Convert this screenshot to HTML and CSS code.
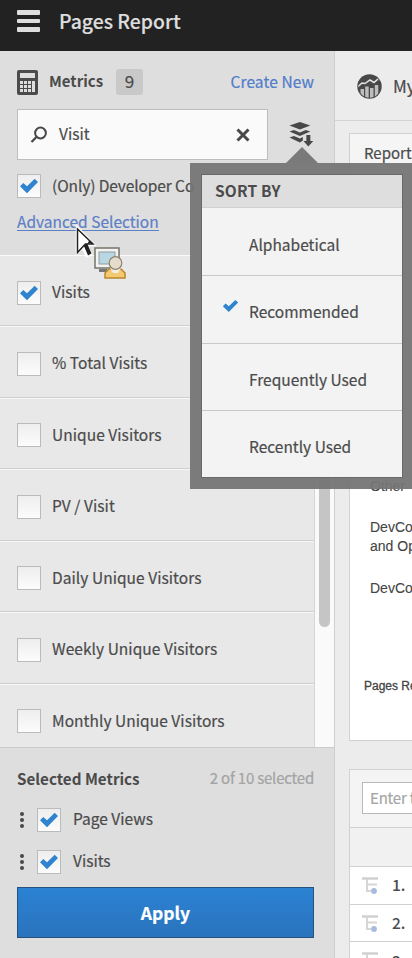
FILE: index.html
```html
<!DOCTYPE html>
<html lang="en">
<head>
<meta charset="utf-8">
<title>Pages Report</title>
<link rel="stylesheet" href="styles.css">
</head>
<body>
<svg class="defs" width="0" height="0">
  <symbol id="check" viewBox="0 0 20 16"><path d="M1 8.300 4.300 5 8 8.300 15.700 .8 19 4 8 15.200Z" fill="#2f83cf"/></symbol>
  <symbol id="tree" viewBox="0 0 17 17"><path d="M0 1.500h16" stroke="#cfcfcd" stroke-width="2.400"/><path d="M5 2v12h4M5 7.500h10" fill="none" stroke="#d8d6d2" stroke-width="2"/><circle cx="12" cy="14" r="2.900" fill="#a9b9e0"/></symbol>
</svg>
<header class="topbar">
  <div class="burger"><i></i><i></i><i></i></div>
  <h1>Pages Report</h1>
</header>
<main class="layout">
  <aside class="sidebar">
    <section class="tools">
      <div class="heading">
        <svg width="21" height="25" viewBox="0 0 21 25"><rect x="0" y="0" width="21" height="25" rx="2" fill="#4b4b4b"/><path d="M3 3h15v5H3zM3 11h3v3H3zM7 11h3v3H7zM11 11h3v3h-3zM15 11h3v11h-3zM3 15h3v3H3zM7 15h3v3H7zM11 15h3v3h-3zM3 19h3v3H3zM7 19h3v3H7zM11 19h3v3h-3z" fill="#dedede"/></svg>
        <b class="title">Metrics</b><span class="count">9</span><a class="create">Create New</a>
      </div>
      <div class="searchrow">
        <div class="search">
          <svg width="18" height="18" viewBox="0 0 18 18" fill="none" stroke="#484848" stroke-width="2"><circle cx="10.500" cy="7" r="5.400"/><path d="M6.700 10.800 1.500 16" stroke-width="2.300"/></svg>
          <span class="query">Visit</span>
          <svg class="clear" width="14" height="14" viewBox="0 0 14 14" stroke="#484848" stroke-width="3"><path d="M1.500 1.500 12.500 12.500M12.500 1.500 1.500 12.500"/></svg>
        </div>
        <svg class="layers" width="26" height="26" viewBox="0 0 26 26" fill="#484848"><path d="M1.500 4.500 12 1l10.500 3.500L12 8.500zM1.500 10.500l4.500-1.500 6 2.500L18 9l4.500 1.500L12 15zM1.500 16.500 6 15l6 2.500 3-1.500v3.500L12 21.500zM18.500 14h4v6h3L20.500 25.500 15.500 20h3z"/></svg>
      </div>
      <div class="only"><span class="box"><svg><use href="#check"/></svg></span><span class="t-only">(Only) Developer Co</span></div>
      <a class="advanced">Advanced Selection</a>
    </section>
    <section class="list">
      <div class="rows">
        <div class="row"><span class="box"><svg><use href="#check"/></svg></span><span>Visits</span></div>
        <div class="row"><span class="box"></span><span>% Total Visits</span></div>
        <div class="row"><span class="box"></span><span>Unique Visitors</span></div>
        <div class="row"><span class="box"></span><span>PV / Visit</span></div>
        <div class="row"><span class="box"></span><span>Daily Unique Visitors</span></div>
        <div class="row"><span class="box"></span><span>Weekly Unique Visitors</span></div>
        <div class="row"><span class="box"></span><span>Monthly Unique Visitors</span></div>
      </div>
      <div class="track"><div class="thumb"></div></div>
    </section>
    <section class="selected">
      <div class="selhead"><b>Selected Metrics</b><span>2 of 10 selected</span></div>
      <div class="selrow"><span class="grip"><i></i><i></i><i></i></span><span class="box"><svg><use href="#check"/></svg></span><span>Page Views</span></div>
      <div class="selrow"><span class="grip"><i></i><i></i><i></i></span><span class="box"><svg><use href="#check"/></svg></span><span>Visits</span></div>
      <button class="apply">Apply</button>
    </section>
  </aside>
  <section class="content">
    <div class="crumb">
      <svg width="25" height="25" viewBox="0 0 25 25"><defs><clipPath id="disc"><circle cx="12.500" cy="12.500" r="11.200"/></clipPath></defs><circle cx="12.500" cy="12.500" r="12.200" fill="#484848"/><g clip-path="url(#disc)"><path d="M0 13.500 5 9l3 .5L13 6l4 2.500L21 5l4 2" fill="none" stroke="#e4e4e4" stroke-width="1.500"/><path d="M3.500 15h3.500v10H3.500zM8.200 12.500h3.500V25H8.200zM13 14h3.500v11H13zM17.800 11h3.500v14h-3.500z" fill="#bdbdbd"/></g></svg>
      <span>My</span>
    </div>
    <div class="report">
      <div class="rephead">Report</div>
      <div class="legend"><p class="other">Other</p><p class="dev1">DevCo<br>and Op</p><p class="dev2">DevCo</p><p class="caption">Pages Re</p></div>
    </div>
    <div class="table">
      <div class="filter"><div class="input">Enter te</div></div>
      <div class="thead"></div>
      <div class="tr"><svg width="17" height="17"><use href="#tree"/></svg><b>1.</b></div>
      <div class="tr"><svg width="17" height="17"><use href="#tree"/></svg><b>2.</b></div>
      <div class="tr"><svg width="17" height="17"><use href="#tree"/></svg><b>3.</b></div>
    </div>
  </section>
</main>
<div class="popover">
  <div class="menu">
    <div class="mhead">SORT BY</div>
    <div class="item">Alphabetical</div>
    <div class="item"><svg class="tick"><use href="#check"/></svg>Recommended</div>
    <div class="item">Frequently Used</div>
    <div class="item">Recently Used</div>
  </div>
</div>
<svg class="cursor" width="52" height="56" viewBox="0 0 52 56">
  <path d="M2 2v26l5.500-5.500 4.500 8.500 4-2-4-9h7z" fill="#fff" stroke="#fff" stroke-width="2.500"/>
  <path d="M8.500 20 12 18l4.500 10.500-3.500 2z" fill="#222"/>
  <path d="M2.500 4v23.500l6-6.500 2-2h7.500z" fill="#fff" stroke="#222" stroke-width="1.500"/>
  <path d="M9 20h2.500l-1 3zM12.500 18.500h5l-3-3.500z" fill="#222"/>
  <rect x="20" y="23" width="24" height="20" fill="#f3f3ef" stroke="#77736b" stroke-width="1.500"/>
  <rect x="24" y="27" width="16" height="12" fill="#b9d6e3" stroke="#8c9ba0"/>
  <path d="M24 44h8v3h-8z" fill="#777"/>
  <path d="M30 53v-5l4-4h12l4 4v5z" fill="#f3ca70" stroke="#bb852c" stroke-width="1.500"/>
  <path d="M35 43h11l-3 5h-5z" fill="#f1eee6"/>
  <circle cx="40.500" cy="38" r="6.300" fill="#e6dccb" stroke="#8d8371" stroke-width="1.200"/>
</svg>
</body>
</html>
```
FILE: styles.css
```css
* { box-sizing: border-box; }
body { margin: 0; width: 412px; height: 958px; overflow: hidden; position: relative; background: #ececec; color: #4b4b4b; font: 400 15.5px/20px "Noto Sans CJK SC", "Noto Sans", sans-serif; -webkit-text-stroke: .2px; white-space: nowrap; }
.defs { position: absolute; }
.topbar { height: 51px; background: #222; display: flex; align-items: flex-start; padding: 10px 17px 0; gap: 19px; }
.burger { width: 23px; display: grid; gap: 4px; }
.burger i { height: 4.500px; background: #dedede; border-radius: 1px; }
h1 { margin: -1px 0 0; font-size: 19.400px; line-height: 24px; font-weight: 500; color: #dedede; }
.layout { display: flex; height: 907px; }
.sidebar { width: 335px; flex: none; display: flex; flex-direction: column; background: #dedede; border-right: 1px solid #cfcfcf; }
.tools { height: 205px; padding: 19px 20px 0 17px; border-bottom: 1px solid #fafafa; flex: none; }
.heading { display: flex; align-items: center; height: 25px; }
.title { margin: -3px 0 0 11px; font-weight: 700; font-size: 15px; -webkit-text-stroke: 0; }
.count { margin: -2px 0 0 13px; width: 27px; height: 26px; border-radius: 3px; background: #c9c9c9; text-align: center; line-height: 24px; font-size: 17px; }
.create { margin: -3px 0 0 auto; color: #507cca; letter-spacing: .1px; }
.searchrow { display: flex; margin-top: 14px; }
.search { width: 253px; height: 51px; background: #fafafa; border: 1px solid #bdbdbd; display: flex; align-items: center; padding: 0 17px 0 12px; }
.query { margin: -3px 0 0 11px; }
.clear { margin-left: auto; }
.layers { margin: 12px 0 0 20px; }
.box { width: 24px; height: 24px; flex: none; border: 1px solid #bbb; background: linear-gradient(#eee, #fcfcfc); display: grid; place-items: center; }
.box svg { width: 20px; height: 16px; }
.only { display: flex; align-items: center; gap: 11px; margin-top: 14px; height: 24px; }
.t-only { margin-top: -2px; letter-spacing: -.1px; }
.advanced { display: inline-block; margin-top: 15px; height: 18px; line-height: 17px; color: #5d80c5; border-bottom: 1px solid #5d80c5; }
.list { height: 491px; overflow: hidden; display: flex; background: #e8e8e8; flex: none; }
.rows { width: 315px; border-right: 1px solid #d5d5d5; }
.row { height: 71.500px; display: flex; align-items: center; gap: 11px; padding: 5px 0 0 17px; border-bottom: 1px solid #cecece; box-shadow: 0 1px #f8f8f8; letter-spacing: .05px; }
.row:first-child { height: 70px; padding-top: 4px; }
.row span + span { margin-top: -3px; }
.track { flex: 1; background: #fafafa; padding-left: 4px; }
.thumb { width: 11px; height: 371px; border-radius: 6px; background: #c5c5c5; }
.selected { flex: 1; border-top: 1px solid #cbcbcb; padding: 20px 20px 0 17px; }
.selhead { display: flex; justify-content: space-between; margin-bottom: 20px; }
.selhead b { font-weight: 700; font-size: 15.200px; -webkit-text-stroke: 0; }
.selhead span { color: #a3a3a3; font-size: 15px; letter-spacing: -.2px; }
.selrow { display: flex; align-items: center; height: 24px; margin-bottom: 18px; }
.selrow .box + span { margin-top: -4px; }
.grip { width: 20px; display: grid; gap: 2px; }
.grip i { width: 4px; height: 4px; border-radius: 50%; background: #484848; margin-left: 3px; }
.selrow .box { margin-right: 12px; }
.apply { width: 297px; height: 51px; margin-top: -5px; padding: 0; border: 1px solid #25517e; background: linear-gradient(#2b82d3, #2a73bd); color: #fff; font: 700 17.500px/47px "Noto Sans CJK SC", sans-serif; display: block; }
.content { flex: 1; min-width: 0; overflow: hidden; }
.crumb { height: 70px; border-bottom: 1px solid #d3d3d3; display: flex; align-items: center; gap: 11px; padding: 1px 0 0 22px; font-size: 17px; }
.crumb svg { flex: none; }
.report { margin: 12px 0 0 14px; height: 608px; border: 1px solid #d1d1d1; border-right: 0; background: #fff; }
.rephead { height: 42px; background: #f5f5f5; padding: 9px 0 0 14px; font-size: 15px; }
.legend { color: #444; font: 14px/19px "Liberation Sans", sans-serif; -webkit-text-stroke: .1px; }
.legend p { margin: 0 0 0 20px; }
.legend .other { margin-top: 301px; }
.legend .dev1 { margin-top: 22px; }
.legend .dev2 { margin-top: 23px; }
.legend .caption { margin: 79px 0 0 14px; font-size: 12px; -webkit-text-stroke: .3px #444; }
.table { margin: 28px 0 0 14px; border: 1px solid #d1d1d1; border-right: 0; background: #fff; }
.filter { height: 58px; background: #f4f4f4; border-bottom: 1px solid #d1d1d1; padding: 12px 0 0 12px; }
.input { height: 32px; border: 1px solid #b9b9b9; border-right: 0; background: #fff; color: #a5a5a5; padding: 5px 0 0 7px; font-size: 15px; letter-spacing: -.2px; overflow: hidden; }
.thead { height: 39px; background: #f1f1f1; border-bottom: 1px solid #d1d1d1; }
.tr { height: 37.700px; border-bottom: 1px solid #d1d1d1; display: flex; align-items: center; gap: 13px; padding-left: 12px; }
.tr b { font-weight: 500; margin-top: -2px; -webkit-text-stroke: 0; }
.popover { position: absolute; left: 190px; top: 163px; width: 222px; height: 326px; padding: 12px 9px 11px 12px; background: rgba(117,117,117,.95); }
.popover::before { content: ""; position: absolute; left: 96px; top: -16px; border: 16px solid transparent; border-top: 0; border-bottom-color: #7a7a7a; }
.menu { width: 200px; height: 302px; background: #f3f3f3; box-shadow: 0 0 0 1px #696969; }
.mhead { height: 33px; padding: 5px 0 0 13px; background: #dedede; font-weight: 700; -webkit-text-stroke: 0; letter-spacing: .2px; border-bottom: 1px solid #d1d1d1; }
.item { position: relative; height: 67.400px; padding: 26px 0 0 47px; }
.item + .item { border-top: 1px solid #c8c8c8; padding-top: 25px; }
.tick { position: absolute; left: 20px; top: 23px; width: 17px; height: 14px; }
.cursor { position: absolute; left: 75px; top: 225px; }
```
